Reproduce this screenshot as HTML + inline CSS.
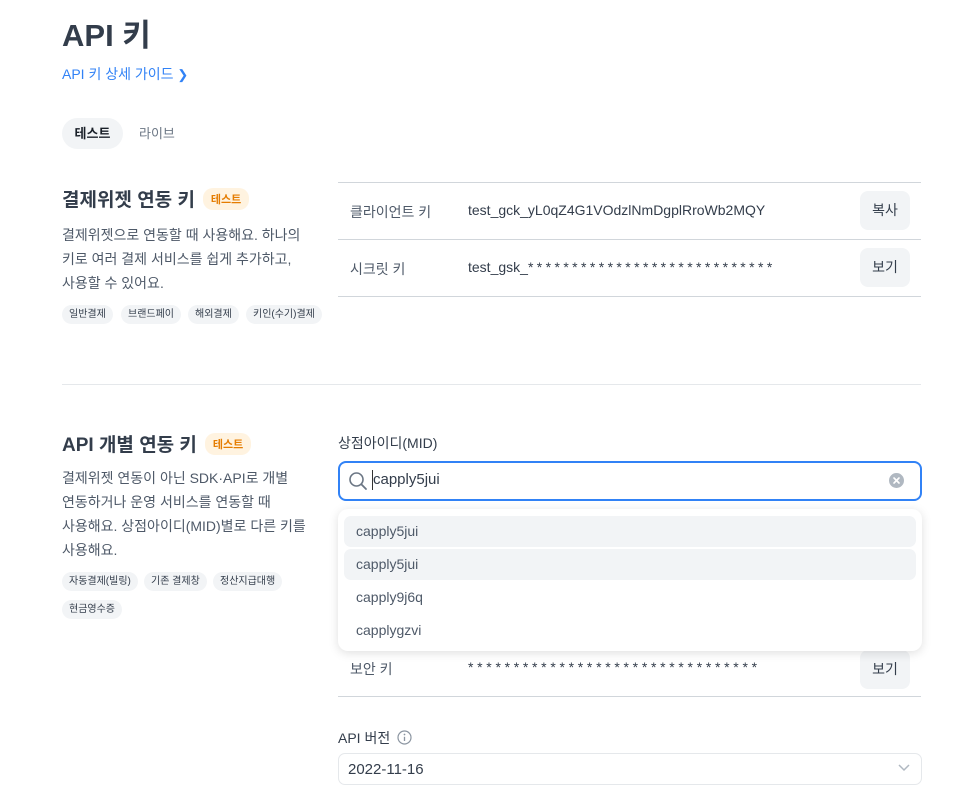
<!DOCTYPE html>
<html><head><meta charset="utf-8"><style>
*{box-sizing:border-box;margin:0;padding:0}
body{width:961px;height:809px;overflow:hidden;background:#fff;font-family:"Liberation Sans","Noto Sans CJK KR",sans-serif;color:#333d4b;position:relative}
.a{position:absolute;white-space:nowrap}
.h1{font-size:31px;font-weight:700;color:#333d4b}
.h2{font-size:19px;font-weight:700;color:#333d4b}
.badge{display:inline-block;background:#fff3e0;color:#e57c00;font-size:11px;font-weight:700;border-radius:10px;padding:3px 8px;vertical-align:3px;margin-left:8px}
.desc{font-size:14px;line-height:24px;color:#4e5968}
.chip{position:absolute;height:19px;line-height:19px;background:#f2f4f6;border-radius:10px;font-size:10px;color:#333d4b;padding:0 7px}
.line{position:absolute;height:1px;background:#d1d6db}
.btn{position:absolute;left:860px;width:50px;height:39px;background:#f2f4f6;border-radius:8px;font-size:14px;text-align:center;line-height:39px;color:#333d4b}
.lbl{font-size:14px;color:#4e5968}
.val{font-size:14px;color:#333d4b}
.item{position:absolute;left:344px;width:572px;height:31px;line-height:31px;padding-left:12px;font-size:14px;color:#4e5968;border-radius:7px}
</style></head><body>
<div class="a h1" style="left:62px;top:10px">API 키</div>
<div class="a" style="left:62px;top:64px;font-size:14px;color:#3182f6">API 키 상세 가이드 <span style="font-size:13px">&#x276F;</span></div>
<div class="a" style="left:62px;top:118px;width:61px;height:31px;border-radius:16px;background:#f2f4f6;font-size:13px;font-weight:700;line-height:31px;text-align:center;color:#191f28">테스트</div>
<div class="a" style="left:139px;top:118px;line-height:31px;font-size:13px;color:#6b7684">라이브</div>

<div class="a h2" style="left:62px;top:185px">결제위젯 연동 키<span class="badge">테스트</span></div>
<div class="a desc" style="left:62px;top:223px">결제위젯으로 연동할 때 사용해요. 하나의<br>키로 여러 결제 서비스를 쉽게 추가하고,<br>사용할 수 있어요.</div>
<div class="chip" style="left:62px;top:305px">일반결제</div>
<div class="chip" style="left:121px;top:305px">브랜드페이</div>
<div class="chip" style="left:188px;top:305px">해외결제</div>
<div class="chip" style="left:246px;top:305px">키인(수기)결제</div>

<div class="line" style="left:338px;width:583px;top:182px"></div>
<div class="a lbl" style="left:350px;top:202px">클라이언트 키</div>
<div class="a val" style="left:468px;top:202px">test_gck_yL0qZ4G1VOdzlNmDgplRroWb2MQY</div>
<div class="btn" style="top:191px">복사</div>
<div class="line" style="left:338px;width:583px;top:239px"></div>
<div class="a lbl" style="left:350px;top:259px">시크릿 키</div>
<div class="a val" style="left:468px;top:259px">test_gsk_<span style="letter-spacing:3.4px">****************************</span></div>
<div class="btn" style="top:248px">보기</div>
<div class="line" style="left:338px;width:583px;top:296px"></div>

<div class="line" style="left:62px;width:859px;top:384px;background:#e5e8eb"></div>

<div class="a h2" style="left:62px;top:430px">API 개별 연동 키<span class="badge">테스트</span></div>
<div class="a desc" style="left:62px;top:466px">결제위젯 연동이 아닌 SDK·API로 개별<br>연동하거나 운영 서비스를 연동할 때<br>사용해요. 상점아이디(MID)별로 다른 키를<br>사용해요.</div>
<div class="chip" style="left:62px;top:572px">자동결제(빌링)</div>
<div class="chip" style="left:144px;top:572px">기존 결제창</div>
<div class="chip" style="left:213px;top:572px">정산지급대행</div>
<div class="chip" style="left:62px;top:600px">현금영수증</div>

<div class="a lbl" style="left:338px;top:433px;color:#333d4b">상점아이디(MID)</div>
<div class="a" style="left:338px;top:461px;width:584px;height:40px;border:2px solid #3182f6;border-radius:8px"></div>
<svg class="a" style="left:348px;top:471px" width="20" height="20" viewBox="0 0 20 20"><circle cx="8.5" cy="8.5" r="6.5" fill="none" stroke="#6b7684" stroke-width="1.6"/><path d="M13.3 13.3L18 18" stroke="#6b7684" stroke-width="1.8" stroke-linecap="round"/></svg>
<div class="a" style="left:372px;top:470px;width:1px;height:20px;background:#333"></div>
<div class="a" style="left:373px;top:470px;font-size:15px;line-height:20px;color:#333d4b">capply5jui</div>
<svg class="a" style="left:888px;top:472px" width="17" height="17" viewBox="0 0 17 17"><circle cx="8.5" cy="8.5" r="7.5" fill="#b0b8c1"/><path d="M6 6l5 5M11 6l-5 5" stroke="#fff" stroke-width="1.6" stroke-linecap="round"/></svg>

<div class="a lbl" style="left:350px;top:659px">보안 키</div>
<div class="a val" style="left:468px;top:659px;letter-spacing:3.7px">********************************</div>
<div class="btn" style="top:650px">보기</div>
<div class="line" style="left:338px;width:583px;top:696px"></div>

<div class="a" style="left:338px;top:509px;width:584px;height:142px;background:#fff;border-radius:10px;box-shadow:0 2px 10px rgba(0,0,0,0.13)"></div>
<div class="item" style="top:516px;background:#f2f4f6">capply5jui</div>
<div class="item" style="top:549px;background:#f2f4f6">capply5jui</div>
<div class="item" style="top:582px">capply9j6q</div>
<div class="item" style="top:615px">capplygzvi</div>

<div class="a" style="left:338px;top:728px;font-size:14px;color:#333d4b">API 버전</div>
<svg class="a" style="left:397px;top:730px" width="15" height="15" viewBox="0 0 15 15"><circle cx="7.5" cy="7.5" r="6.5" fill="none" stroke="#8b95a1" stroke-width="1.2"/><circle cx="7.5" cy="4.5" r="0.9" fill="#8b95a1"/><path d="M7.5 6.8v4.2" stroke="#8b95a1" stroke-width="1.3"/></svg>
<div class="a" style="left:338px;top:753px;width:584px;height:32px;border:1px solid #e5e8eb;border-radius:7px"></div>
<div class="a" style="left:348px;top:761px;font-size:15px;line-height:18px;color:#333d4b">2022-11-16</div>
<svg class="a" style="left:897px;top:763px" width="14" height="10" viewBox="0 0 14 10"><path d="M2 2l5 5 5-5" fill="none" stroke="#b0b8c1" stroke-width="1.5"/></svg>
</body></html>
